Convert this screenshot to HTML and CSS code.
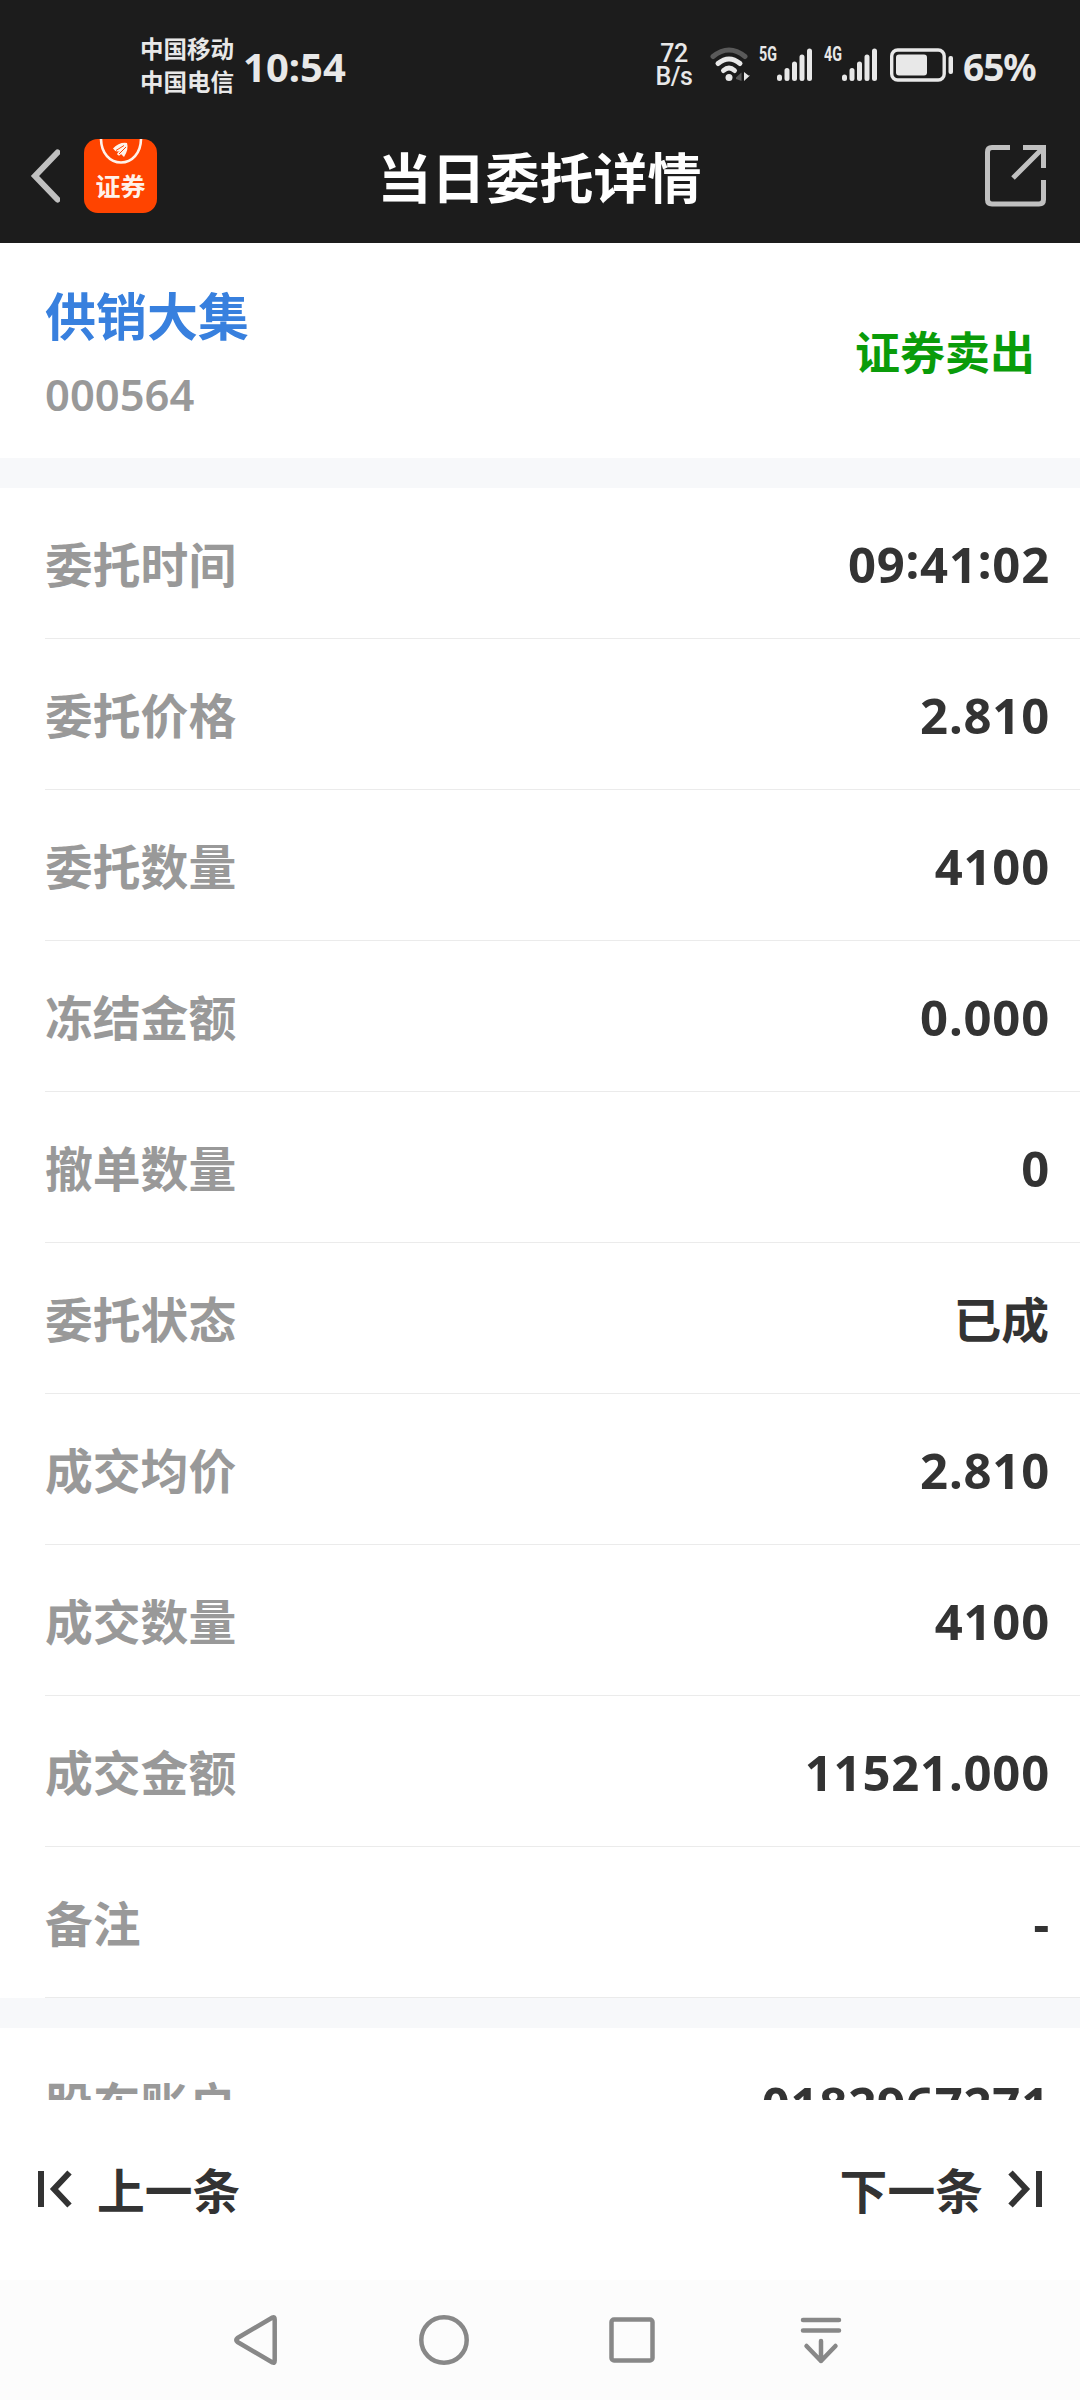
FILE: index.html
```
<!DOCTYPE html>
<html lang="zh-CN">
<head>
  <meta charset="UTF-8" />
  <meta name="viewport" content="width=device-width, initial-scale=1.0"/>
  <title>当日委托详情</title>
  <link rel="stylesheet" href="styles.css">
</head>
<body>
  <div class="phone">
    <header class="top">
      <div class="status-bar">
        <div class="carriers">
          <span>中国移动</span>
          <span>中国电信</span>
        </div>
        <span class="clock">10:54</span>
        <div class="speed">
          <span>72</span>
          <span>B/s</span>
        </div>
        <svg class="wifi" width="40" height="36" viewBox="0 0 40 36" fill="none" stroke="#e8e8e8" stroke-width="5" stroke-linecap="round">
          <path d="M3 9.5Q19 -3.5 35 9.5" stroke="#5a5a5a" />
          <path d="M8 16.5Q19 7.5 30 16.5" />
          <path d="M13.5 23.5Q19 18.5 24.5 23.5" />
          <circle cx="19" cy="30.5" r="3.5" fill="#e8e8e8" stroke="none" />
          <path d="M26 30.5L31.5 25.5V34L26 32Z" fill="#5a5a5a" stroke="none" />
          <path d="M34 25V34L40 28.5H38.5Z" fill="#e8e8e8" stroke="none" />
        </svg>
        <span class="net net-5g">5G</span>
        <svg class="signal" width="36" height="34" viewBox="0 0 36 34" stroke="#e8e8e8" stroke-width="5" stroke-linecap="round">
          <path d="M2.5 29V30.5M10 22.5V30.5M17.5 16V30.5M25 9V30.5M32.5 3V30.5" />
        </svg>
        <span class="net net-4g">4G</span>
        <svg class="signal" width="36" height="34" viewBox="0 0 36 34" stroke="#e8e8e8" stroke-width="5" stroke-linecap="round">
          <path d="M2.5 29V30.5M10 22.5V30.5M17.5 16V30.5M25 9V30.5M32.5 3V30.5" />
        </svg>
        <svg class="battery" width="64" height="34" viewBox="0 0 64 34">
          <rect x="1.7" y="2" width="52.5" height="30" rx="6" fill="none" stroke="#e8e8e8" stroke-width="3.4" />
          <rect x="6" y="6.5" width="31" height="21" rx="3" fill="#e8e8e8" />
          <rect x="58.5" y="8" width="4.5" height="18" rx="2" fill="#e8e8e8" />
        </svg>
        <span class="percent">65%</span>
      </div>
      <div class="title-bar">
        <div class="title-left">
          <svg width="32" height="56" viewBox="0 0 32 56" fill="none" stroke="#c0c0c0" stroke-width="6" stroke-linecap="round">
            <path d="M29.5 4.5L7 28L29.5 51.5" />
          </svg>
          <div class="app-icon">
            <svg width="72" height="30" viewBox="0 0 72 30" fill="none">
              <path d="M16 -2C15 32 57 32 56 -2" stroke="#fff2ea" stroke-width="2.6" />
              <path d="M28 9.5Q34 3 42 4Q44 10 39 18L36 15Q34 18 32 15Q33 13 35 12Q31 14 28 9.5Z" fill="#fff2ea" />
              <path d="M31 11.5L39 6.5M34 15L41 8" stroke="#ff4400" stroke-width="1" />
            </svg>
            <span>证券</span>
          </div>
        </div>
        <h1>当日委托详情</h1>
        <svg width="62" height="62" viewBox="0 0 62 62" fill="none" stroke="#c0c0c0" stroke-width="5">
          <path d="M25 2.5H7Q2.5 2.5 2.5 7V54.5Q2.5 59 7 59H54Q58.5 59 58.5 54.5V35M38 2.5H58.5V23M58 3L28 33" />
        </svg>
      </div>
    </header>

    <section class="stock">
      <div>
        <h2>供销大集</h2>
        <p class="num">000564</p>
      </div>
      <strong>证券卖出</strong>
    </section>

    <main class="details">
      <div class="row"><span>委托时间</span><b class="num">09<i>:</i>41<i>:</i>02</b></div>
      <div class="row"><span>委托价格</span><b class="num">2.810</b></div>
      <div class="row"><span>委托数量</span><b class="num">4100</b></div>
      <div class="row"><span>冻结金额</span><b class="num">0.000</b></div>
      <div class="row"><span>撤单数量</span><b class="num">0</b></div>
      <div class="row"><span>委托状态</span><b>已成</b></div>
      <div class="row"><span>成交均价</span><b class="num">2.810</b></div>
      <div class="row"><span>成交数量</span><b class="num">4100</b></div>
      <div class="row"><span>成交金额</span><b class="num">11521.000</b></div>
      <div class="row"><span>备注</span><b class="num">-</b></div>
      <div class="gap"></div>
      <div class="row"><span>股东账户</span><b class="num">0182967271</b></div>
    </main>

    <footer class="pager">
      <div class="pager-item">
        <svg width="36" height="38" viewBox="0 0 36 38" fill="none" stroke="#333" stroke-width="6">
          <path d="M5 1V37M33.5 2.5L18 19L33.5 35.5" />
        </svg>
        <span>上一条</span>
      </div>
      <div class="pager-item">
        <span>下一条</span>
        <svg width="36" height="38" viewBox="0 0 36 38" fill="none" stroke="#333" stroke-width="6">
          <path d="M31 1V37M2.5 2.5L18 19L2.5 35.5" />
        </svg>
      </div>
    </footer>

    <nav class="nav-bar">
      <svg width="64" height="64" viewBox="0 0 64 64"><path d="M48.5 9.5Q50.7 8.5 50.7 11.5V52.5Q50.7 55.5 48.5 54.5L13.5 34Q11 32 13.5 30Z" /></svg>
      <svg width="64" height="64" viewBox="0 0 64 64"><circle cx="32" cy="32" r="22.7" /></svg>
      <svg width="64" height="64" viewBox="0 0 64 64"><rect x="11.5" y="11.5" width="41" height="41" rx="2.5" /></svg>
      <svg width="64" height="64" viewBox="0 0 64 64"><path d="M15 12H51M15 22.5H51M33 33V53M18.5 38L33 53L47.5 38" /></svg>
    </nav>
  </div>
</body>
</html>
```
FILE: styles.css
```
* {
  box-sizing: border-box;
}

body {
  margin: 0;
  background: #fff;
  font-family: "Noto Sans CJK SC", sans-serif;
  font-weight: 600;
  color: #333;
}

.phone {
  width: 1080px;
  height: 2400px;
  display: flex;
  flex-direction: column;
  overflow: hidden;
}

h1,
h2,
p {
  margin: 0;
}

.num {
  font-family: "Noto Sans", "Noto Sans CJK SC", sans-serif;
}

/* status bar + title */
.top {
  height: 243px;
  background: #1c1c1c;
  flex-shrink: 0;
}

.status-bar {
  height: 130px;
  padding: 0 0 0 140px;
  display: flex;
  align-items: center;
  color: #e8e8e8;
}

.carriers {
  width: 103px;
  display: flex;
  flex-direction: column;
  font-size: 23.5px;
  line-height: 33px;
  font-weight: 700;
}

.clock {
  width: 412px;
  font-family: "Noto Sans", sans-serif;
  font-size: 40px;
  font-weight: 700;
  padding-top: 2px;
}

.speed {
  width: 38px;
  margin-right: 17px;
  display: flex;
  flex-direction: column;
  text-align: center;
  font-family: Roboto, sans-serif;
  font-size: 25px;
  font-weight: 500;
  line-height: 23px;
  letter-spacing: -0.5px;
}

.net {
  width: 18px;
  font-family: Roboto, sans-serif;
  font-size: 21px;
  font-weight: 700;
  line-height: 20px;
  margin-bottom: 22px;
  transform: scaleX(0.68);
  transform-origin: left;
  white-space: nowrap;
}

.net-5g {
  margin-left: 9px;
}

.net-4g {
  margin-left: 11px;
}

.battery {
  margin-left: 12px;
}

.percent {
  margin-left: 9px;
  font-family: "Noto Sans", sans-serif;
  font-size: 37px;
  font-weight: 700;
  letter-spacing: -1px;
  padding-top: 2px;
}

.title-bar {
  height: 92px;
  padding: 0 33px 0 28px;
  display: grid;
  grid-template-columns: 1fr auto 1fr;
  align-items: center;
  color: #fff;
}

.title-bar > svg {
  justify-self: end;
}

.title-left {
  display: flex;
  align-items: center;
  gap: 24px;
}

.title-bar h1 {
  margin-left: 4px;
  font-size: 54px;
  font-weight: 600;
  line-height: 80px;
}

.app-icon {
  width: 73px;
  height: 74px;
  border-radius: 14px;
  background: #ff4400;
  overflow: hidden;
  display: flex;
  flex-direction: column;
  align-items: center;
}

.app-icon span {
  font-family: "Noto Sans CJK SC", sans-serif;
  font-size: 25px;
  line-height: 32px;
  font-weight: 700;
  color: #fff2ea;
}

/* stock name */
.stock {
  height: 215px;
  padding: 0 45px;
  display: flex;
  justify-content: space-between;
  align-items: center;
  flex-shrink: 0;
}

.stock h2 {
  font-size: 51px;
  line-height: 72px;
  font-weight: 600;
  color: #3880de;
}

.stock p {
  font-size: 43.5px;
  line-height: 60px;
  margin-top: 14px;
  color: #999;
}

.stock strong {
  font-size: 45px;
  font-weight: 600;
  color: #0a9c0a;
}

/* detail rows */
.details {
  height: 1642px;
  border-top: 30px solid #f7f8fa;
  overflow: hidden;
  flex-shrink: 0;
}

.row {
  height: 151px;
  margin-left: 45px;
  padding: 0 31px 2px 0;
  border-bottom: 1px solid #ebebeb;
  display: flex;
  justify-content: space-between;
  align-items: center;
  font-size: 47.8px;
}

.row span {
  color: #999;
}

.row b {
  font-weight: 600;
}

.row i {
  font-style: normal;
  position: relative;
  top: -4px;
}

.row .num {
  font-size: 49px;
  font-weight: 700;
  letter-spacing: 0.8px;
  margin-right: -1px;
  padding-top: 3px;
}

.gap {
  height: 30px;
  background: #f7f8fa;
}

/* previous / next */
.pager {
  height: 180px;
  padding: 0 36px 2px;
  display: flex;
  justify-content: space-between;
  align-items: center;
  font-size: 47.8px;
  flex-shrink: 0;
}

.pager-item {
  display: flex;
  align-items: center;
  gap: 25px;
}

.pager-item span {
  margin-top: -2px;
}

/* system navigation */
.nav-bar {
  height: 120px;
  background: #fcfcfc;
  padding-left: 224px;
  display: flex;
  align-items: center;
  gap: 124px;
  flex-shrink: 0;
}

.nav-bar svg {
  fill: none;
  stroke: #888;
  stroke-width: 4.5;
  stroke-linecap: round;
  stroke-linejoin: round;
}
```
